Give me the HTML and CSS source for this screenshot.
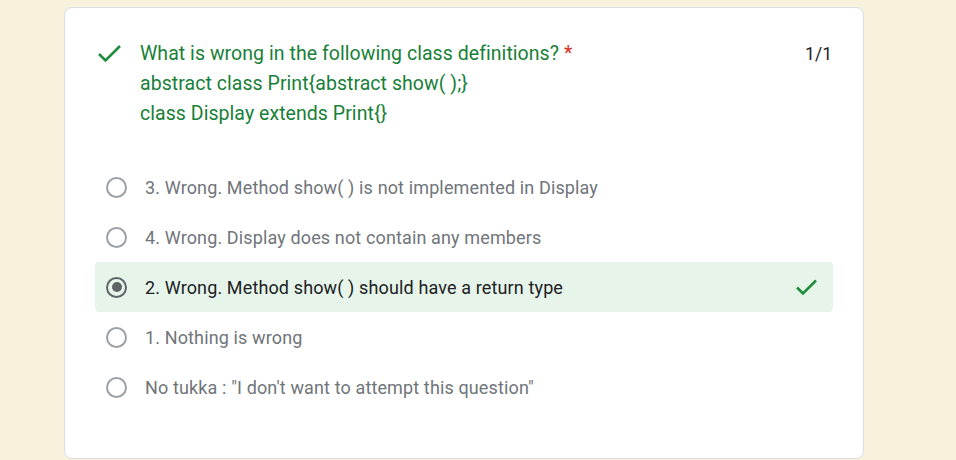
FILE: index.html
```html
<!DOCTYPE html>
<html lang="en">
<head>
<meta charset="utf-8">
<title>Quiz result</title>
<link rel="stylesheet" href="styles.css">
</head>
<body>
<div class="card">
  <div class="header">
    <svg class="qcheck" width="24" height="24" viewBox="0 0 24 24"><polyline points="1,12 7.5,18.5 22,4" fill="none" stroke="#1e8e3e" stroke-width="2.6"/></svg>
    <div class="title">
      <div>What is wrong in the following class definitions? <span class="req">*</span></div>
      <div>abstract class Print{abstract show( );}</div>
      <div>class Display extends Print{}</div>
    </div>
    <div class="score">1/1</div>
  </div>
  <div class="options">
    <div class="opt"><span class="radio"></span><span class="label">3. Wrong. Method show( ) is not implemented in Display</span></div>
    <div class="opt"><span class="radio"></span><span class="label">4. Wrong. Display does not contain any members</span></div>
    <div class="opt correct"><span class="radio on"></span><span class="label">2. Wrong. Method show( ) should have a return type</span>
      <svg class="ocheck" width="24" height="24" viewBox="0 0 24 24"><polyline points="2,12.5 8,18.5 21,5.5" fill="none" stroke="#1e8e3e" stroke-width="2.6"/></svg>
    </div>
    <div class="opt"><span class="radio"></span><span class="label">1. Nothing is wrong</span></div>
    <div class="opt"><span class="radio"></span><span class="label">No tukka : "I don't want to attempt this question"</span></div>
  </div>
</div>
</body>
</html>
```
FILE: styles.css
```css
html, body {
  margin: 0;
  padding: 0;
  background: #f8f1dc;
  font-family: Roboto, "Noto Sans", Arial, sans-serif;
}
body {
  padding: 7px 0 0 64px;
}
.card {
  width: 800px;
  background: #fff;
  border: 1px solid #dadce0;
  border-radius: 8px;
  padding: 31px 30px 45px 30px;
  box-sizing: border-box;
  height: 452px;
}
.header {
  display: flex;
  align-items: flex-start;
  padding-left: 3px;
}
.qcheck {
  margin-top: 3px;
  margin-right: 18px;
  flex: none;
}
.title {
  flex: 1;
  color: #188038;
  font-size: 19.5px;
  line-height: 30px;
  letter-spacing: 0.05px;
}
.req {
  color: #d93025;
}
.score {
  color: #202124;
  font-size: 17.5px;
  line-height: 30px;
  margin-right: 1px;
}
.options {
  margin-top: 33px;
  display: flex;
  flex-direction: column;
}
.opt {
  display: flex;
  align-items: center;
  height: 50px;
  padding-left: 11px;
  padding-right: 14px;
  border-radius: 4px;
  font-size: 18px;
  letter-spacing: 0.13px;
  color: #70757a;
}
.opt.correct {
  background: #e6f4ea;
  color: #202124;
}
.radio {
  width: 21px;
  height: 21px;
  box-sizing: border-box;
  border: 2px solid #9aa0a6;
  border-radius: 50%;
  margin-right: 18px;
  flex: none;
  display: flex;
  align-items: center;
  justify-content: center;
}
.radio.on {
  border-color: #5f6368;
}
.radio.on::after {
  content: "";
  width: 10px;
  height: 10px;
  border-radius: 50%;
  background: #5f6368;
}
.label {
  flex: 1;
}
.ocheck {
  flex: none;
}
```
